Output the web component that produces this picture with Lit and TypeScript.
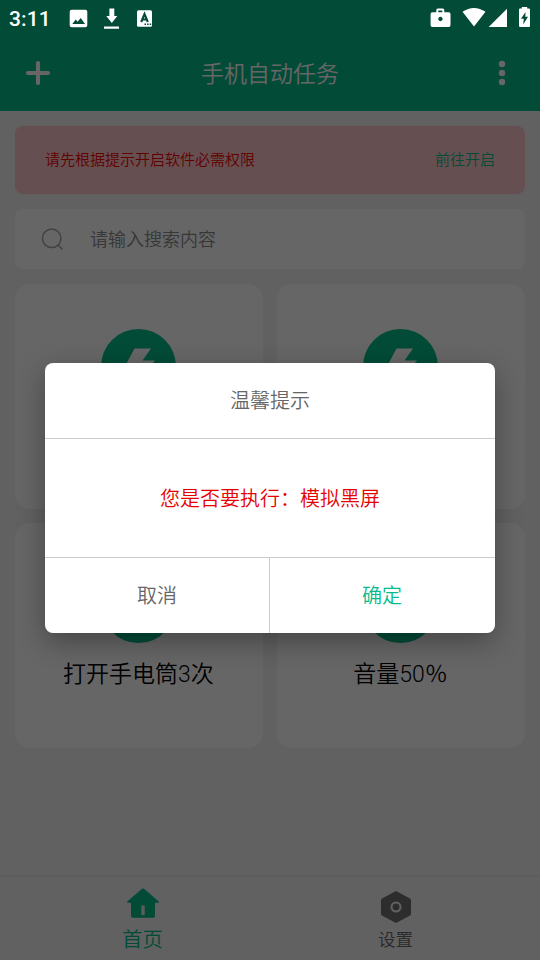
import { LitElement, html, css, svg, nothing } from "lit";
import { customElement } from "lit/decorators.js";

const bolt = svg`<svg class="badge" viewBox="0 0 75 75">
  <circle cx="37.5" cy="37.5" r="37.5" fill="#05bb8b"/>
  <path d="M33.5 19.5H50L41.5 31.5H54L31 58L36 41H22Z" fill="#fff"/></svg>`;

@customElement("app-root")
export class AppRoot extends LitElement {
  static styles = css`
    :host {
      display: block;
      position: relative;
      width: 540px;
      height: 960px;
      overflow: hidden;
      font-family: "Noto Sans CJK SC", sans-serif;
      font-weight: 350;
      --green: #05bb8b;
    }
    * { box-sizing: border-box; }
    svg { display: block; flex: none; }
    .page { display: flex; flex-direction: column; height: 100%; background: #f2f2f2; }
    .header {
      display: flex; align-items: center; justify-content: space-between;
      height: 111px; padding: 35px 25px 0 25px; background: var(--green);
      color: #fff; font-size: 23px;
    }
    .title { line-height: 34px; padding-bottom: 2px; }
    .content { flex: 1; display: flex; flex-direction: column; gap: 15px; padding: 15px; }
    .banner {
      display: flex; align-items: center; justify-content: space-between;
      height: 68px; padding: 0 30px 3px; border-radius: 8px; background: #ffc6cb;
      font-size: 15px; color: #f50000;
    }
    .link { color: var(--green); }
    .search {
      display: flex; align-items: center; gap: 26px; height: 60px; padding-left: 26px;
      background: #fff; border-radius: 8px; font-size: 18px; color: #8a8a8a;
    }
    .hint { padding-bottom: 2px; }
    .cards { display: grid; grid-template-columns: 1fr 1fr; gap: 14px; grid-auto-rows: 225px; }
    .card {
      display: flex; flex-direction: column; align-items: center; gap: 15px;
      padding: 45px 1px 0 0; background: #fff; border-radius: 15px;
      font-family: Roboto, "Noto Sans CJK SC", sans-serif;
      font-size: 23px; line-height: 34px; color: #000;
    }
    .badge { width: 75px; height: 75px; }
    .tabs {
      display: grid; grid-template-columns: 1fr 1fr; height: 85px; padding: 0 18px 0 16px;
      border-top: 2px solid #e9e9e9; background: #f2f2f2;
    }
    .tab {
      display: flex; flex-direction: column; align-items: center; justify-content: flex-end;
      font-size: 17.5px; line-height: 24px; color: #666; padding-bottom: 9px; gap: 4px;
    }
    .active { font-size: 20.5px; color: var(--green); line-height: 28px; padding-bottom: 8px; gap: 6px; }
    .mask {
      position: absolute; inset: 0; display: flex; justify-content: center; align-items: flex-start;
      padding-top: 363px; background: rgba(0, 0, 0, 0.6);
    }
    .dialog {
      display: grid; grid-template-rows: 76px 119px 75px; width: 450px; height: 270px;
      background: #fff; border-radius: 8px; box-shadow: 0 9px 28px rgba(0, 0, 0, 0.32);
      font-size: 20px; color: #666; text-align: center;
    }
    .heading { border-bottom: 1px solid #ccc; line-height: 74px; }
    .message { border-bottom: 1px solid #ccc; color: #e60000; line-height: 118px; }
    .actions { display: grid; grid-template-columns: 1fr 1fr; line-height: 74px; }
    .cancel { border-right: 1px solid #ccc; }
    .ok { color: var(--green); padding-right: 1px; }
    .status {
      position: absolute; inset: 0 0 auto; height: 36px; display: flex; align-items: center;
      padding: 0 8px 0 9px; color: #fff; font: 500 21px Roboto, sans-serif;
    }
    .clock { width: 59px; line-height: 36px; padding-top: 2px; letter-spacing: 0.1px; }
    .spacer { flex: 1; }
  `;

  private card(label?: string) {
    return html`<div class="card">${bolt}${label ? html`<span>${label}</span>` : nothing}</div>`;
  }

  render() {
    return html`
      <div class="page">
        <div class="header">
          <svg width="26" height="26" viewBox="0 0 26 26" stroke="#fff" stroke-width="4.2" stroke-linecap="round"><path d="M13 3V23M3 13H23"/></svg>
          <span class="title">手机自动任务</span>
          <svg width="26" height="26" viewBox="0 0 26 26" fill="#fff"><circle cx="13" cy="4" r="3.2"/><circle cx="13" cy="13" r="3.2"/><circle cx="13" cy="22" r="3.2"/></svg>
        </div>
        <div class="content">
          <div class="banner"><span>请先根据提示开启软件必需权限</span><span class="link">前往开启</span></div>
          <div class="search">
            <svg width="23" height="24" viewBox="0 0 23 24" fill="none" stroke="#a6a6a6" stroke-width="1.5" stroke-linecap="round"><circle cx="10.7" cy="11.3" r="9.3"/><path d="M17.5 18.5L21 22"/></svg>
            <span class="hint">请输入搜索内容</span>
          </div>
          <div class="cards">
            ${this.card()}${this.card()}${this.card("打开手电筒3次")}${this.card("音量50％")}
          </div>
        </div>
        <div class="tabs">
          <div class="tab active">
            <svg width="32" height="30" viewBox="0 0 32 30"><path d="M15 .8Q16 0 17 .8L31.5 13.3Q32.3 14.6 31 14.8H28V28Q28 29.8 26.3 29.8H5.8Q4 29.8 4 28V14.8H1Q-.3 14.6.5 13.3Z" fill="#05bb8b"/><rect x="14.3" y="17.5" width="3.4" height="9.5" fill="#e6e6e6"/></svg>
            <span>首页</span>
          </div>
          <div class="tab">
            <svg width="30" height="32" viewBox="0 0 30 32"><path d="M14 .5Q15 0 16 .5L29 7.5Q30 8 30 9V23Q30 24 29 24.5L16 31.5Q15 32 14 31.5L1 24.5Q0 24 0 23V9Q0 8 1 7.5Z" fill="#707070"/><circle cx="15" cy="16" r="4.5" fill="none" stroke="#f2f2f2" stroke-width="2.1"/></svg>
            <span>设置</span>
          </div>
        </div>
      </div>
      <div class="mask">
        <div class="dialog">
          <div class="heading">温馨提示</div>
          <div class="message">您是否要执行：模拟黑屏</div>
          <div class="actions"><div class="cancel">取消</div><div class="ok">确定</div></div>
        </div>
      </div>
      <div class="status">
        <span class="clock">3:11</span>
        <svg width="84" height="36" viewBox="0 0 84 36" fill="#fff">
          <path fill-rule="evenodd" d="M3.7 9.7H17.3Q19.3 9.7 19.3 11.7V25.3Q19.3 27.3 17.3 27.3H3.7Q1.7 27.3 1.7 25.3V11.7Q1.7 9.7 3.7 9.7ZM4.3 24H17L12.7 18L9.7 21.8L7.7 19.4Z"/>
          <path d="M41.4 8.5H46.3V16H49.3L43.8 23L38.3 16H41.4ZM36 26.5H51V28.8H36Z"/>
          <rect x="69" y="10.3" width="15" height="16.5" rx="1.5"/>
          <path fill="none" stroke="#024b38" stroke-width="2.1" d="M73.2 22L76.5 14L79.8 22M74.5 19.5H78.5"/>
          <path fill="#024b38" d="M76.5 23.5h1.5v1.5h-1.5zM79.1 23.5h1.5v1.5h-1.5zM81.7 23.5h1.5v1.5h-1.5z"/>
        </svg>
        <span class="spacer"></span>
        <svg width="102" height="36" viewBox="430 0 102 36" fill="#fff">
          <path fill-rule="evenodd" d="M432.3 12.3H436.3V10Q436.3 8.5 437.8 8.5H442.8Q444.3 8.5 444.3 10V12.3H448.8Q450.5 12.3 450.5 14V25.3Q450.5 27 448.8 27H432.3Q430.6 27 430.6 25.3V14Q430.6 12.3 432.3 12.3ZM438.3 12.3H442.3V10.5H438.3ZM440.4 16.8A2.2 2.2 0 1 0 440.5 16.8Z"/>
          <path d="M462.5 11.8Q474 4.2 485.5 11.8L474 26.6Z"/>
          <path d="M507 8.7V27H488.7Z"/>
          <path fill-rule="evenodd" d="M520 8.5H521.8V7H527.2V8.5H529Q530 8.5 530 9.5V26Q530 27 529 27H520Q519 27 519 26V9.5Q519 8.5 520 8.5ZM525.5 12L521 18.7H523.8L523.2 24.5L528 16.8H525.3Z"/>
        </svg>
      </div>
    `;
  }
}
